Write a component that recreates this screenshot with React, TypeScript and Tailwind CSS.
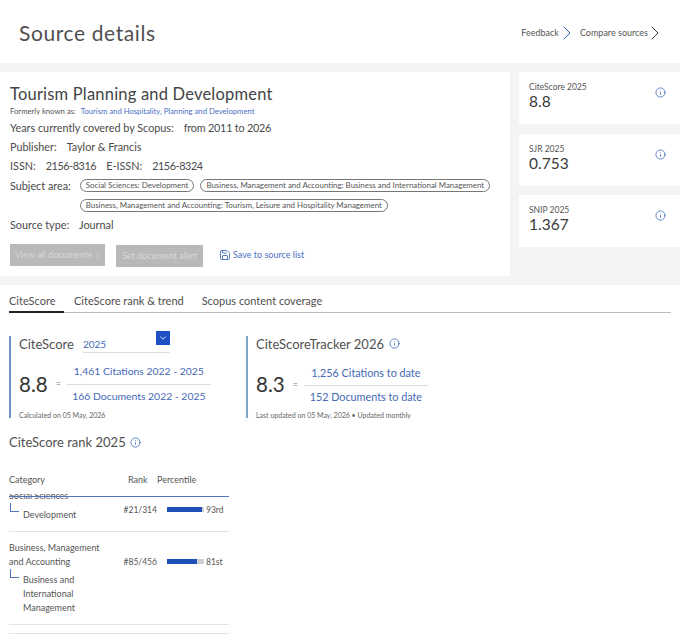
import { ChevronDown, ChevronRight, Info, Save } from "lucide-react";

const metrics = [
  { label: "CiteScore 2025", value: "8.8" },
  { label: "SJR 2025", value: "0.753" },
  { label: "SNIP 2025", value: "1.367" },
];

function Pill({ children }: { children: string }) {
  return (
    <span className="h-[13px] rounded-full border border-[#777] px-[5px] text-[7.9px] leading-[11px] whitespace-nowrap text-[#555]">
      {children}
    </span>
  );
}

function InfoIcon({ className }: { className: string }) {
  return <Info size={11} strokeWidth={1.6} className={`text-[#2f5fb3] ${className}`} />;
}

function Bar({ width }: { width: string }) {
  return (
    <div className="mb-[1px] h-[5px] w-[37px] bg-[#cfcfd2]">
      <div className="h-full bg-[#1f4fb8]" style={{ width }} />
    </div>
  );
}

function Elbow() {
  return <div className="ml-[1px] h-[9px] w-[9px] shrink-0 border-b border-l border-[#4f73bf]" />;
}

export default function App() {
  return (
    <div className="h-[635px] w-[680px] overflow-hidden bg-white font-['Lato',sans-serif] text-[#4a4a4a]">
      <header className="flex h-[63px] items-center justify-between pr-[13px] pl-[19px]">
        <h1 className="pt-[3px] text-[21px] tracking-[0.6px] text-[#505050]">Source details</h1>
        <div className="flex items-center pt-[3px] text-[9px] text-[#555]">
          <span>Feedback</span>
          <ChevronRight size={24} strokeWidth={1} className="ml-[-4px] text-[#2f5fb3]" />
          <span className="ml-[1px]">Compare sources</span>
          <ChevronRight size={24} strokeWidth={1} className="ml-[-5px] text-[#333]" />
        </div>
      </header>

      <section className="flex h-[222px] gap-[9px] bg-[#f4f4f4] pt-[9px] pb-[9px]">
        <div className="h-[204px] w-[510px] bg-white pt-[10px] pl-[10px]">
          <h2 className="text-[16.5px] leading-[24px] tracking-[0.2px] text-[#444]">Tourism Planning and Development</h2>
          <p className="flex h-[12px] items-center text-[7.7px] text-[#555]">
            Formerly known as:
            <a className="ml-[5px] text-[#4a6fc4]">Tourism and Hospitality, Planning and Development</a>
          </p>
          <div className="mt-[1px] flex h-[19px] items-center text-[10.8px]">
            Years currently covered by Scopus:<span className="ml-[10px] tracking-[-0.2px]">from 2011 to 2026</span>
          </div>
          <div className="flex h-[19px] items-center text-[10.8px]">
            Publisher:<span className="ml-[10px]">Taylor &amp; Francis</span>
          </div>
          <div className="flex h-[19px] items-center text-[10.8px]">
            ISSN:<span className="ml-[10px] tracking-[-0.4px]">2156-8316</span>
            <span className="ml-[10px]">E-ISSN:</span>
            <span className="ml-[10px] tracking-[-0.4px]">2156-8324</span>
          </div>
          <div className="flex gap-[9px] text-[10.8px]">
            <span className="leading-[19px]">Subject area:</span>
            <div className="flex w-[420px] flex-wrap gap-x-[6px] gap-y-[7px] pt-[3px]">
              <Pill>Social Sciences: Development</Pill>
              <Pill>Business, Management and Accounting: Business and International Management</Pill>
              <Pill>Business, Management and Accounting: Tourism, Leisure and Hospitality Management</Pill>
            </div>
          </div>
          <div className="mt-[4px] flex h-[18px] items-center text-[10.8px]">
            Source type:<span className="ml-[10px]">Journal</span>
          </div>
          <div className="mt-[9px] flex items-center text-[9px]">
            <div className="flex h-[22px] w-[95px] items-center bg-[#b9b9b9] pl-[5px] text-[#d8d8d8]">
              View all documents
              <ChevronRight size={12} strokeWidth={1.4} />
            </div>
            <div className="mt-[2px] ml-[11px] flex h-[22px] w-[87px] items-center justify-center bg-[#b9b9b9] text-[#d8d8d8]">
              Set document alert
            </div>
            <Save size={12} strokeWidth={1.6} className="ml-[16px] text-[#2f5fb3]" />
            <a className="ml-[2px] text-[#4a6fc4]">Save to source list</a>
          </div>
        </div>

        <aside className="flex w-[161px] flex-col gap-[9.5px]">
          {metrics.map((m) => (
            <div key={m.label} className="flex h-[52px] items-start justify-between bg-white pt-[9px] pr-[14px] pl-[10px]">
              <div>
                <div className="text-[8.5px] leading-[12px] text-[#555]">{m.label}</div>
                <div className="text-[15.5px] leading-[16px] text-[#3a3a3a]">{m.value}</div>
              </div>
              <InfoIcon className="mt-[6px]" />
            </div>
          ))}
        </aside>
      </section>

      <nav className="mt-[7px] ml-[9px] flex h-[21px] w-[662px] gap-[18px] border-b border-[#bdbdbd] text-[11px] leading-[18px] text-[#505050]">
        <span className="h-[21px] w-[55px] border-b-2 border-[#222]">CiteScore</span>
        <span className="ml-[-8px]">CiteScore rank &amp; trend</span>
        <span>Scopus content coverage</span>
      </nav>

      <div className="mt-[23px] ml-[9px] flex">
        <div className="h-[82px] w-[237px] border-l-2 border-[#6f93c4] pl-[8px]">
          <div className="flex">
            <span className="mt-[-1px] text-[13px] leading-[18px] text-[#505050]">CiteScore</span>
            <div className="relative ml-[9px] h-[17px] w-[87px] border-b border-[#dedede] text-[10px] leading-[17px] text-[#3f68b8]">
              2025
              <div className="absolute top-[-5px] right-0 flex h-[14px] w-[14px] items-center justify-center bg-[#1f4fc4]">
                <ChevronDown size={10} className="text-white" />
              </div>
            </div>
          </div>
          <div className="mt-[8px] flex items-center">
            <span className="text-[20.5px] text-[#333]">8.8</span>
            <span className="ml-[8px] text-[9px] text-[#777]">=</span>
            <div className="ml-[6px] w-[144px] text-center text-[10.4px] leading-[21px] text-[#4368b5]">
              <div className="border-b border-[#dcdcdc] pb-[2px]">1,461 Citations 2022 - 2025</div>
              <div className="pt-[1px]">166 Documents 2022 - 2025</div>
            </div>
          </div>
          <p className="mt-[3px] text-[7px] text-[#666]">Calculated on 05 May, 2026</p>
        </div>

        <div className="h-[82px] border-l-2 border-[#7fa6c4] pl-[8px]">
          <div className="flex items-center">
            <span className="mt-[-1px] text-[13px] leading-[18px] text-[#505050]">CiteScoreTracker 2026</span>
            <InfoIcon className="mb-[2px] ml-[5px]" />
          </div>
          <div className="mt-[9px] flex items-center">
            <span className="text-[20.5px] text-[#333]">8.3</span>
            <span className="ml-[8px] text-[9px] text-[#777]">=</span>
            <div className="ml-[6px] w-[124px] text-center text-[10.8px] leading-[21px] text-[#4368b5]">
              <div className="border-b border-[#dcdcdc] pb-[2px]">1,256 Citations to date</div>
              <div>152 Documents to date</div>
            </div>
          </div>
          <p className="mt-[3px] text-[7px] text-[#666]">Last updated on 05 May, 2026 • Updated monthly</p>
        </div>
      </div>

      <div className="mt-[15px] ml-[9px] w-[220px]">
        <div className="flex items-center">
          <span className="text-[13px] leading-[18px] text-[#505050]">CiteScore rank 2025</span>
          <InfoIcon className="ml-[4px]" />
        </div>
        <div className="mt-[21px] flex h-[16px] items-center text-[9px] text-[#555]">
          <span className="w-[119px]">Category</span>
          <span className="w-[29px]">Rank</span>
          <span>Percentile</span>
        </div>
        <div className="relative mt-[6px] h-[141px] overflow-hidden text-[9px] leading-[14px] text-[#555]">
          <div className="absolute top-[2px] right-0 left-0 border-t border-[#4f73bf]" />
          <div className="mt-[-5px] flex h-[43px] border-b border-[#e4e4e4]">
            <div className="w-[109px]">
              <div>Social Sciences</div>
              <div className="flex">
                <Elbow />
                <span className="mt-[5px] ml-[4px]">Development</span>
              </div>
            </div>
            <div className="mt-[14px] flex h-[14px] items-center text-[8.5px]">
              <span className="w-[39px] text-right">#21/314</span>
              <span className="ml-[10px] flex items-center">
                <Bar width="94%" />
                <span className="ml-[2px]">93rd</span>
              </span>
            </div>
          </div>
          <div className="flex h-[93px] border-b border-[#e4e4e4] pt-[9px]">
            <div className="w-[109px]">
              <div className="w-[100px]">Business, Management and Accounting</div>
              <div className="flex">
                <Elbow />
                <span className="mt-[4px] ml-[4px] w-[62px]">Business and International Management</span>
              </div>
            </div>
            <div className="mt-[14px] flex h-[14px] items-center text-[8.5px]">
              <span className="w-[39px] text-right">#85/456</span>
              <span className="ml-[10px] flex items-center">
                <Bar width="80%" />
                <span className="ml-[2px]">81st</span>
              </span>
            </div>
          </div>
          <div className="mt-[8px] border-t border-[#e4e4e4]" />
        </div>
      </div>
    </div>
  );
}
